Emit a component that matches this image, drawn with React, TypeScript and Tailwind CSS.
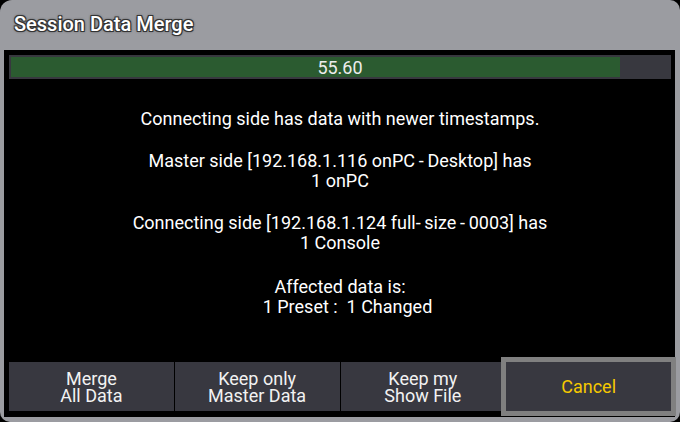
export default function App() {
  const font = { fontFamily: "Roboto, 'Noto Sans', sans-serif" }
  return (
    <div className="w-[680px] h-[422px] bg-black" style={font}>
      <div className="h-full rounded-[10px] rounded-tl-[12px] bg-[#9b9ca1] flex flex-col pl-[4px] pr-[5px] pb-[5px]">
        {/* Title */}
        <div className="h-[50px] flex items-center pl-[10px] pb-[2px]">
          <span className="text-[20px] font-medium text-white [text-shadow:-1px_-1px_0_#333,1px_-1px_0_#333,-1px_1px_0_#333,1px_1px_0_#333,0_0_3px_#000]">
            Session Data Merge
          </span>
        </div>

        {/* Body */}
        <div className="flex-1 bg-black flex flex-col pt-[5px] pl-[5px] pr-[4px] pb-[6px]">
          <div className="relative h-[24px] bg-[#38383f] p-[2px]">
            <div className="h-full w-[609px] bg-[#2b5b30]"></div>
            <div className="absolute inset-0 flex items-center justify-center text-[18px] text-[#ececec]">
              55.60
            </div>
          </div>

          <div className="flex-1 flex flex-col items-center text-white text-[18px] leading-[20px] text-center pt-[30px]">
            <p>Connecting side has data with newer timestamps.</p>
            <p className="mt-[22px]">
              Master side [192.168.1.116 onPC{"\u2009-\u2009"}Desktop] has
              <br />1 onPC
            </p>
            <p className="mt-[22px]">
              Connecting side [192.168.1.124 full-{"\u2009"}size{"\u2009-\u2009"}0003] has
              <br />1 Console
            </p>
            <p className="mt-[24px] flex flex-col items-center">
              <span>Affected data is:</span>
              <span className="whitespace-pre pl-[15px]">1 Preset :  1 Changed</span>
            </p>
          </div>

          <div className="grid grid-cols-4 gap-px h-[49px] text-[18px] leading-[17px] text-[#f2f2f2]">
            <button className="bg-[#383840] flex flex-col items-center justify-center">
              <span>Merge</span>
              <span>All Data</span>
            </button>
            <button className="bg-[#383840] flex flex-col items-center justify-center">
              <span>Keep only</span>
              <span>Master Data</span>
            </button>
            <button className="bg-[#383840] flex flex-col items-center justify-center">
              <span>Keep my</span>
              <span>Show File</span>
            </button>
            <button className="bg-[#383840] flex items-center justify-center text-[#f5c800] outline-[5px] outline-solid outline-[#808080]">
              Cancel
            </button>
          </div>
        </div>
      </div>
    </div>
  )
}
